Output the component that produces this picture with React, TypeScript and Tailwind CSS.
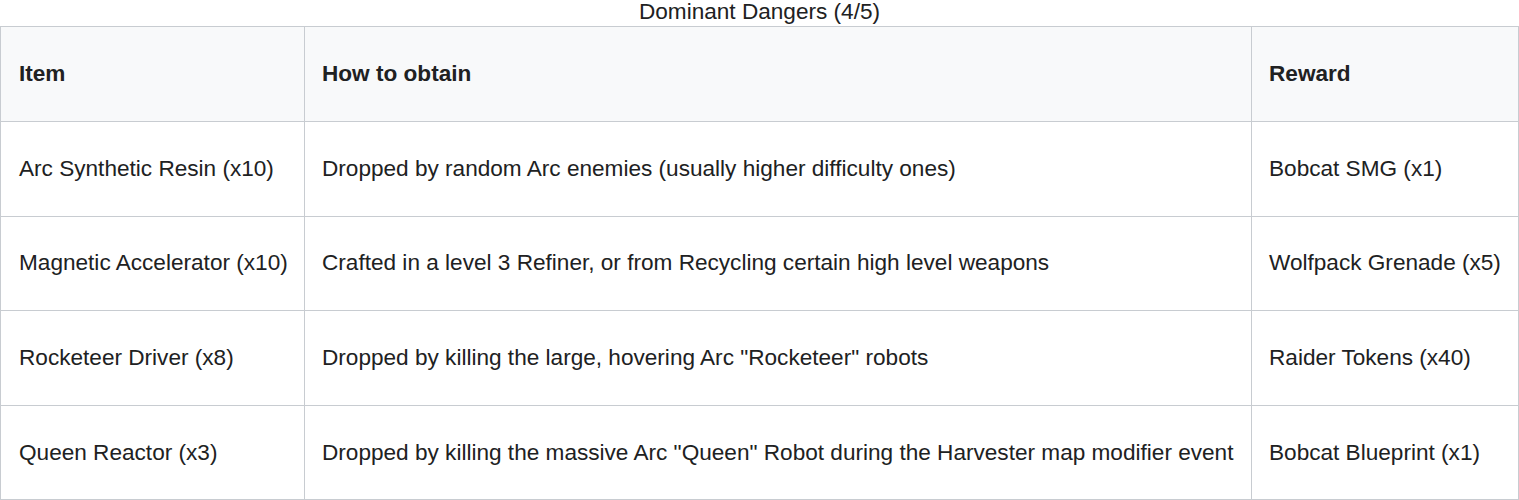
const rows = [
  {
    item: "Arc Synthetic Resin (x10)",
    how: "Dropped by random Arc enemies (usually higher difficulty ones)",
    reward: "Bobcat SMG (x1)",
  },
  {
    item: "Magnetic Accelerator (x10)",
    how: "Crafted in a level 3 Refiner, or from Recycling certain high level weapons",
    reward: "Wolfpack Grenade (x5)",
  },
  {
    item: "Rocketeer Driver (x8)",
    how: 'Dropped by killing the large, hovering Arc "Rocketeer" robots',
    reward: "Raider Tokens (x40)",
  },
  {
    item: "Queen Reactor (x3)",
    how: 'Dropped by killing the massive Arc "Queen" Robot during the Harvester map modifier event',
    reward: "Bobcat Blueprint (x1)",
  },
]

const App = () => {
  return (
    <div className="w-[1519px] bg-white font-['Liberation_Sans',Arial,sans-serif] text-[22.6px] text-[#202122]">
      <table className="w-[1518px] table-fixed border-collapse">
        <caption className="h-[26px] text-center leading-[24px]">
          Dominant Dangers (4/5)
        </caption>
        <colgroup>
          <col className="w-[304px]" />
          <col className="w-[947px]" />
          <col className="w-[267px]" />
        </colgroup>
        {/* Header */}
        <thead>
          <tr className="h-[95px] bg-[#f8f9fa]">
            <th className="border border-[#c8ccd1] px-[18px] text-left font-bold">Item</th>
            <th className="border border-[#c8ccd1] px-[17px] text-left font-bold">How to obtain</th>
            <th className="border border-[#c8ccd1] px-[17px] text-left font-bold">Reward</th>
          </tr>
        </thead>
        {/* Body */}
        <tbody>
          {rows.map((row, index) => (
            <tr key={index} className="h-[94.6px]">
              <td className="border border-[#c8ccd1] px-[18px] text-nowrap">{row.item}</td>
              <td className="border border-[#c8ccd1] px-[17px] text-nowrap">{row.how}</td>
              <td className="border border-[#c8ccd1] px-[17px] text-nowrap">{row.reward}</td>
            </tr>
          ))}
        </tbody>
      </table>
    </div>
  )
}
export default App
